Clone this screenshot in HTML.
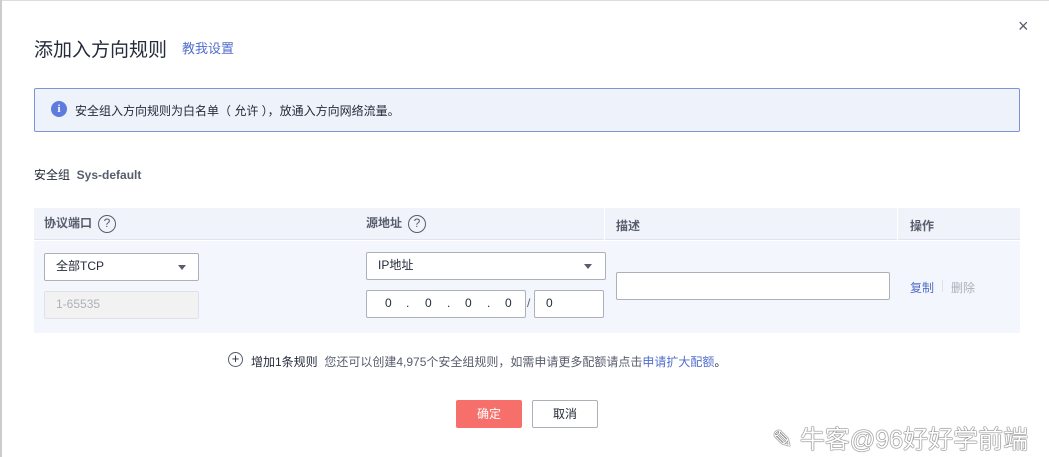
<!DOCTYPE html>
<html><head><meta charset="utf-8"><style>
*{box-sizing:border-box;margin:0;padding:0}
body{width:1049px;height:457px;background:#fff;font-family:"Liberation Sans","Noto Sans CJK SC",sans-serif;color:#252b3a;position:relative;overflow:hidden;font-size:12px}
.a{position:absolute}
.inp{position:absolute;background:#fff;border:1px solid #adb0b8;border-radius:2px;font-size:12px;line-height:25px;padding-left:11px;color:#252b3a}
.tri{position:absolute;width:0;height:0;border-left:4px solid transparent;border-right:4px solid transparent;border-top:5px solid #575d6c}
.q{display:inline-block;width:18px;height:18px;border:1.3px solid #575d6c;border-radius:50%;font-size:12px;line-height:15px;text-align:center;font-weight:normal;vertical-align:middle;margin-left:6px}
</style></head><body>
<div class="a" style="left:0;top:0;width:2px;height:457px;background:#ccc"></div>
<div class="a" style="left:2px;top:0;width:1047px;height:1px;background:#ddd"></div>
<div class="a" style="left:34px;top:35px;font-size:19px;color:#252b3a">添加入方向规则</div>
<div class="a" style="left:182px;top:38px;font-size:13px;color:#526ecc">教我设置</div>
<div class="a" style="left:1018px;top:16px;font-size:18px;color:#575d6c">×</div>
<div class="a" style="left:34px;top:88px;width:986px;height:44px;background:#eef2fb;border:1px solid #7f94d6;border-radius:2px"></div>
<div class="a" style="left:51px;top:101px;width:16px;height:16px;border-radius:50%;background:#5e7ce0;color:#fff;font-size:11px;font-weight:bold;text-align:center;line-height:16px;font-family:'Liberation Serif',serif">i</div>
<div class="a" style="left:75px;top:102px;font-size:12px">安全组入方向规则为白名单（ 允许 ），放通入方向网络流量。</div>
<div class="a" style="left:34px;top:166px">安全组 &nbsp;<b style="color:#575d6c">Sys-default</b></div>
<div class="a" style="left:34px;top:208px;width:986px;height:32px;background:#f0f3fa;border-bottom:1px solid #dfe4f0"></div>
<div class="a" style="left:604px;top:208px;width:1px;height:32px;background:#fff"></div>
<div class="a" style="left:897px;top:208px;width:1px;height:32px;background:#fff"></div>
<div class="a" style="left:44px;top:214px;font-weight:bold;color:#575d6c">协议端口<span class="q">?</span></div>
<div class="a" style="left:366px;top:214px;font-weight:bold;color:#575d6c">源地址<span class="q">?</span></div>
<div class="a" style="left:616px;top:217px;font-weight:bold;color:#575d6c">描述</div>
<div class="a" style="left:910px;top:217px;font-weight:bold;color:#575d6c">操作</div>
<div class="a" style="left:34px;top:241px;width:986px;height:92px;background:#f3f6fd"></div>
<div class="inp" style="left:44px;top:253px;width:155px;height:28px">全部TCP</div><div class="tri" style="left:178px;top:265px"></div>
<div class="inp" style="left:44px;top:291px;width:155px;height:28px;background:#f2f2f2;border-color:#dfe1e6;color:#adb0b8">1-65535</div>
<div class="inp" style="left:366px;top:252px;width:240px;height:28px">IP地址</div><div class="tri" style="left:584px;top:264px"></div>
<div class="inp" style="left:366px;top:290px;width:160px;height:28px;padding-left:0"><span class="a" style="left:18px">0</span><span class="a" style="left:39px">.</span><span class="a" style="left:58px">0</span><span class="a" style="left:80px">.</span><span class="a" style="left:98px">0</span><span class="a" style="left:120px">.</span><span class="a" style="left:138px">0</span></div>
<div class="a" style="left:527px;top:296px;color:#575d6c">/</div>
<div class="inp" style="left:534px;top:290px;width:70px;height:28px">0</div>
<div class="inp" style="left:616px;top:272px;width:274px;height:28px"></div>
<div class="a" style="left:910px;top:279px;color:#526ecc">复制</div>
<div class="a" style="left:942px;top:280px;width:1px;height:12px;background:#dfe1e6"></div>
<div class="a" style="left:951px;top:279px;color:#adb0b8">删除</div>
<div class="a" style="left:228px;top:352px;width:15px;height:15px;border:1.3px solid #575d6c;border-radius:50%;text-align:center;line-height:12px;font-size:13px">+</div>
<div class="a" style="left:251px;top:353px">增加1条规则 &nbsp;<span style="color:#575d6c">您还可以创建4,975个安全组规则，如需申请更多配额请点击</span><span style="color:#526ecc">申请扩大配额</span>。</div>
<div class="a" style="left:456px;top:400px;width:66px;height:28px;background:#f66f6a;border-radius:2px;color:#fff;text-align:center;line-height:28px">确定</div>
<div class="a" style="left:532px;top:400px;width:66px;height:28px;border:1px solid #adb0b8;border-radius:2px;text-align:center;line-height:26px">取消</div>
<div class="a" style="left:772px;top:420px;font-size:25px;color:#fff;letter-spacing:0;text-shadow:0 0 1px #555,0 0 1px #555,0 0 1px #555">✎ 牛客@96好好学前端</div>
</body></html>
